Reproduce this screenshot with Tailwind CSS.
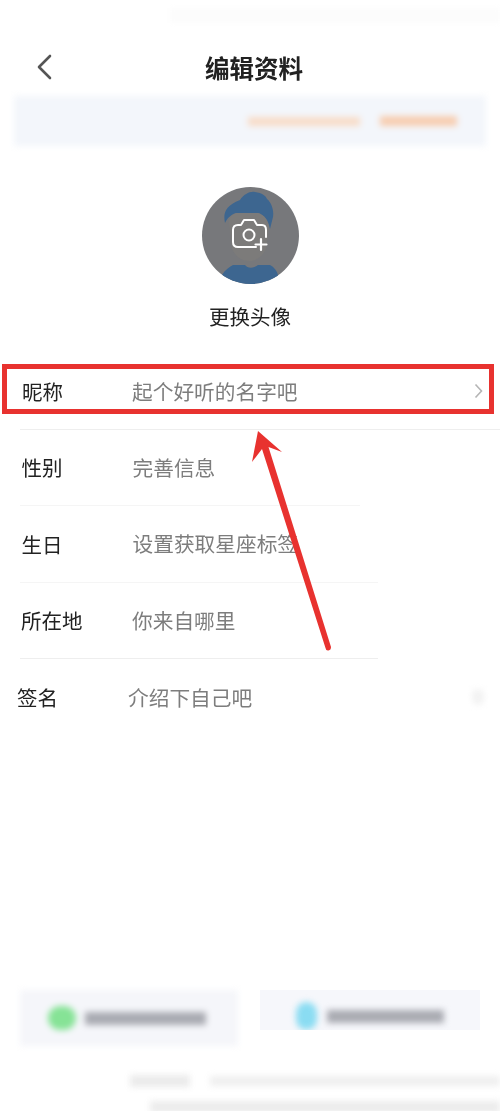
<!DOCTYPE html>
<html lang="zh-CN">
  <head>
    <meta charset="UTF-8" />
    <meta name="viewport" content="width=device-width, initial-scale=1.0" />
    <title>编辑资料</title>
    <script src="https://cdn.jsdelivr.net/npm/@tailwindcss/browser@4"></script>
  </head>
  <body class="bg-white">
    <div class="relative w-[500px] h-[1111px] overflow-hidden bg-white font-['Noto_Sans_CJK_SC','Noto_Sans',sans-serif]">
      <!-- faint status bar -->
      <div class="h-[48px] pt-[8px] pl-[170px]">
        <div class="h-[15px] bg-[#fcfcfc] blur-[2px]"></div>
      </div>

      <!-- header -->
      <header class="relative h-[48px] flex items-center justify-center blur-[0.5px]">
        <svg class="absolute left-[36px] top-[6px] w-[16px] h-[26px]" viewBox="0 0 16 26" fill="none" stroke="#555" stroke-width="2.6" stroke-linecap="round" stroke-linejoin="round">
          <path d="M14 2 L3 13 L14 24" />
        </svg>
        <h1 class="pl-[8px] -mt-[8px] text-[24.5px] leading-[32px] font-bold text-[#222]">编辑资料</h1>
      </header>

      <!-- blurred notice banner -->
      <div class="mx-[14px] h-[50px] flex items-center justify-end pr-[29px] gap-[20px] bg-[#f3f6fb] blur-[3px]">
        <div class="w-[112px] h-[9px] bg-[#f8dcc8]"></div>
        <div class="w-[77px] h-[10px] bg-[#f7cdb0]"></div>
      </div>

      <!-- avatar -->
      <div class="flex flex-col items-center pt-[41px]">
        <div class="w-[97px] h-[97px] rounded-full overflow-hidden blur-[0.5px]">
          <svg class="w-full h-full" viewBox="0 0 97 97">
            <rect width="97" height="97" fill="#77787b" />
            <path d="M23 36 C21 26 23 19 38 13 C42 7 48 4 53 5 C60 6 64 9 65 12 C70 16 72 24 71 30 L68 42 C66 32 62 28 56 26 L34 26 C28 28 25 32 23 36 Z" fill="#3d6690" />
            <path d="M27 34 C28 29 31 27 35 26 L56 26 C62 28 65 32 67 40 L64 62 C60 70 54 74 47 74 C40 74 34 70 30 62 Z" fill="#7c7b7a" />
            <path d="M20 88 C23 83 27 80 31 78 L43 78 C45 81 51 82 56 78 L68 78 C72 80 75 84 76 88 L76 97 L20 97 Z" fill="#3d6690" />
            <path d="M64 50 V43 Q64 38 60 38 H55 L52 33 H42 L39 38 H36 Q31 38 31 43 V55 Q31 60 36 60 H54" fill="none" stroke="#fff" stroke-width="2" stroke-linejoin="round" stroke-linecap="round" />
            <circle cx="47" cy="48" r="5.5" fill="none" stroke="#fff" stroke-width="2" />
            <path d="M59 52 V63 M53.5 57.5 H64.5" stroke="#fff" stroke-width="2.2" stroke-linecap="round" />
          </svg>
        </div>
        <p class="mt-[17px] text-[20.5px] leading-[30px] text-[#222] blur-[0.4px]">更换头像</p>
      </div>

      <!-- form rows -->
      <div class="mt-[23px] blur-[0.5px]">
        <div class="relative h-[76px] ml-[20px] flex items-center border-b border-[#eee]">
          <span class="w-[110px] pl-[2px] text-[20.5px] text-[#222]">昵称</span>
          <span class="pl-[2px] text-[20.7px] text-[#7d7d7d]">起个好听的名字吧</span>
          <svg class="absolute left-[454px] top-[29px] w-[9px] h-[16px]" viewBox="0 0 9 16" fill="none" stroke="#b5b5b5" stroke-width="1.6">
            <path d="M1.5 1.5 L7.5 8 L1.5 14.5" />
          </svg>
        </div>
        <div class="h-[76px] ml-[20px] mr-[140px] flex items-center border-b border-[#f5f5f5]">
          <span class="w-[110px] pl-[1.5px] text-[20.5px] text-[#222]">性别</span>
          <span class="pl-[2.5px] text-[20.7px] text-[#7d7d7d]">完善信息</span>
        </div>
        <div class="h-[77px] ml-[20px] mr-[122px] flex items-center border-b border-[#f5f5f5]">
          <span class="w-[110px] pl-[1.5px] text-[20.5px] text-[#222]">生日</span>
          <span class="pl-[2.5px] text-[20.7px] whitespace-nowrap text-[#7d7d7d]">设置获取星座标签</span>
        </div>
        <div class="h-[76px] ml-[20px] mr-[122px] flex items-center border-b border-[#eee]">
          <span class="w-[110px] pl-[1px] text-[20.5px] text-[#222]">所在地</span>
          <span class="pl-[2px] text-[20.7px] text-[#7d7d7d]">你来自哪里</span>
        </div>
        <div class="relative h-[77px] ml-[17px] flex items-center">
          <span class="w-[111px] text-[20.5px] text-[#222]">签名</span>
          <span class="text-[20.7px] text-[#7d7d7d]">介绍下自己吧</span>
          <div class="absolute left-[455px] top-[30px] w-[12px] h-[16px] rounded-full bg-[#f2f2f2] blur-[3px]"></div>
        </div>
      </div>

      <!-- blurred sync buttons -->
      <div class="mt-[254px] mx-[20px] flex gap-[22px] items-start">
        <div class="w-[218px] h-[56px] pl-[28px] flex items-center gap-[9px] bg-[#f5f6fa] blur-[3px]">
          <div class="w-[28px] h-[24px] rounded-full bg-[#86e396]"></div>
          <div class="w-[121px] h-[13px] bg-[#a9abb2]"></div>
        </div>
        <div class="w-[220px] h-[40px] overflow-hidden bg-[#f6f7fb]">
          <div class="pl-[36px] pt-[12px] flex items-center gap-[10px] blur-[3px]">
            <div class="w-[21px] h-[28px] rounded-full bg-[#8adcf2]"></div>
            <div class="w-[117px] h-[13px] bg-[#a9abb2]"></div>
          </div>
        </div>
      </div>

      <!-- blurred footer lines -->
      <div class="mt-[29px] pl-[130px] flex gap-[20px] blur-[3px]">
        <div class="w-[60px] h-[12px] bg-[#ebebeb]"></div>
        <div class="flex-1 h-[10px] mt-[1px] bg-[#efefef]"></div>
      </div>
      <div class="mt-[14px] ml-[150px] h-[12px] bg-[#ececec] blur-[3px]"></div>

      <!-- annotation: red box and arrow -->
      <div class="absolute left-[2px] top-[364px] w-[492px] h-[50px] border-[5px] border-[#e8322f]"></div>
      <svg class="absolute left-0 top-0 w-[500px] h-[1111px] pointer-events-none" viewBox="0 0 500 1111">
        <path d="M258 431 L282 452 L268.5 447 L331 647 Q331 650 328.5 650.5 Q326 651 325.5 648 L262 449 L252 462 Z" fill="#e8322f" />
      </svg>
    </div>
  </body>
</html>
